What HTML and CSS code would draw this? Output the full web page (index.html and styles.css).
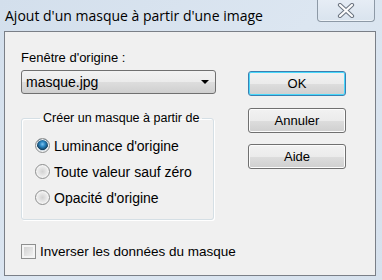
FILE: index.html
```html
<!DOCTYPE html>
<html lang="fr">
<head>
    <meta charset="UTF-8">
    <title>Ajout d'un masque à partir d'une image</title>
    <link rel="stylesheet" href="styles.css">
</head>
<body>
    <div class="window">
        <div class="titlebar">
            <span class="title">Ajout d'un masque à partir d'une image</span>
            <button class="close" aria-label="Fermer">
                <svg width="18" height="15" viewBox="0 0 18 15">
                    <path d="M3 2 L15 13 M15 2 L3 13" stroke="#6b7480" stroke-width="4.2" stroke-linecap="round" fill="none"/>
                    <path d="M3 2 L15 13 M15 2 L3 13" stroke="#fdfdfd" stroke-width="2.2" stroke-linecap="round" fill="none"/>
                </svg>
            </button>
        </div>
        <div class="client">
            <div class="left">
                <label class="field-label">Fenêtre d'origine :</label>
                <div class="combo">
                    <span>masque.jpg</span>
                    <span class="arrow"></span>
                </div>
                <fieldset class="group">
                    <legend>Créer un masque à partir de</legend>
                    <label class="option"><input type="radio" name="src" checked> Luminance d'origine</label>
                    <label class="option"><input type="radio" name="src"> Toute valeur sauf zéro</label>
                    <label class="option"><input type="radio" name="src"> Opacité d'origine</label>
                </fieldset>
                <label class="check"><input type="checkbox"> Inverser les données du masque</label>
            </div>
            <div class="buttons">
                <button class="btn default">OK</button>
                <button class="btn">Annuler</button>
                <button class="btn">Aide</button>
            </div>
        </div>
    </div>
</body>
</html>
```

FILE: styles.css
```css
body {
    margin: 0;
    width: 382px;
    height: 280px;
    overflow: hidden;
    font-family: 'Liberation Sans', Arial, sans-serif;
    font-size: 13px;
    color: #000;
}

.window {
    width: 382px;
    height: 280px;
    display: flex;
    flex-direction: column;
    background: linear-gradient(135deg, #d3dfec 0%, #dce6f1 50%, #d6e1ed 100%);
}

.titlebar {
    height: 31px;
    display: flex;
    justify-content: space-between;
    align-items: flex-start;
    flex-shrink: 0;
}

.title {
    font-family: 'Open Sans', sans-serif;
    font-size: 14px;
    padding: 6px 0 0 5px;
    color: #000;
}

.close {
    width: 58px;
    height: 22px;
    margin-right: 7px;
    padding: 0;
    border: 1px solid #8d99a6;
    border-top: none;
    border-radius: 0 0 4px 4px;
    background: linear-gradient(#e6edf5, #d9e3ee);
    box-shadow: inset 0 -1px 0 #eef3f8;
    display: flex;
    align-items: center;
    justify-content: center;
}

.client {
    margin: 0 6px 4px 4px;
    flex: 1;
    border: 1px solid #7a7f87;
    background: #f0f0f0;
    display: flex;
    padding: 18px 0 0 16px;
    gap: 32px;
}

.left {
    width: 195px;
    display: flex;
    flex-direction: column;
}

.field-label {
    line-height: 15px;
}

.combo {
    margin-top: 5px;
    height: 22px;
    border: 1px solid #707070;
    border-radius: 3px;
    background: linear-gradient(#f2f2f2 0%, #ebebeb 50%, #dddddd 51%, #cfcfcf 100%);
    display: flex;
    align-items: center;
    justify-content: space-between;
    padding: 0 6px 0 4px;
    font-size: 14px;
}

.arrow {
    width: 0;
    height: 0;
    border-left: 4px solid transparent;
    border-right: 4px solid transparent;
    border-top: 4px solid #000;
}

.group {
    margin: 17px 0 0 0;
    width: 178px;
    padding: 10px 0 12px 13px;
    border: 1px solid #d5dfe5;
    border-radius: 3px;
    box-shadow: inset 1px 1px 0 #fff, 1px 1px 0 #fff;
    display: flex;
    flex-direction: column;
    gap: 7px;
}

.group legend {
    padding: 0 3px;
    margin-left: 5px;
    line-height: 15px;
    font-size: 12.5px;
}

.option, .check {
    display: flex;
    align-items: center;
    gap: 4px;
    height: 19px;
    font-size: 14px;
    white-space: nowrap;
}

input[type="radio"] {
    appearance: none;
    margin: 0;
    width: 15px;
    height: 15px;
    flex-shrink: 0;
    border-radius: 50%;
    border: 1px solid #8e8f8f;
    background: radial-gradient(circle at 50% 50%, #d2d2d2 0%, #ececec 55%, #f9f9f9 100%);
    box-shadow: inset 0 0 0 1px #f4f4f4;
}

input[type="radio"]:checked {
    background: radial-gradient(circle at 50% 40%, #7ec3ef 0%, #2b87c3 25%, #14405f 55%, #c9d6df 58%, #eef2f5 100%);
}

.check {
    margin-top: 22px;
    font-size: 13.5px;
}

input[type="checkbox"] {
    appearance: none;
    margin: 0;
    width: 15px;
    height: 15px;
    flex-shrink: 0;
    border: 1px solid #8e8f8f;
    background: linear-gradient(135deg, #cbcbcb, #f7f7f7);
    box-shadow: inset 0 0 0 2px #f4f4f4;
}

.buttons {
    display: flex;
    flex-direction: column;
    width: 98px;
    padding-top: 21px;
}

.btn {
    height: 25px;
    margin-bottom: 11px;
    font-family: 'Liberation Sans', Arial, sans-serif;
    font-size: 13px;
    color: #000;
    border: 1px solid #707070;
    border-radius: 3px;
    background: linear-gradient(#f2f2f2 0%, #ebebeb 50%, #dddddd 51%, #cfcfcf 100%);
    box-shadow: inset 0 0 0 1px #fcfcfc;
    padding: 0;
}

.btn.default {
    border-color: #3c7fb1;
    box-shadow: inset 0 0 0 1px #48d8fb;
    margin-bottom: 12px;
}
```
